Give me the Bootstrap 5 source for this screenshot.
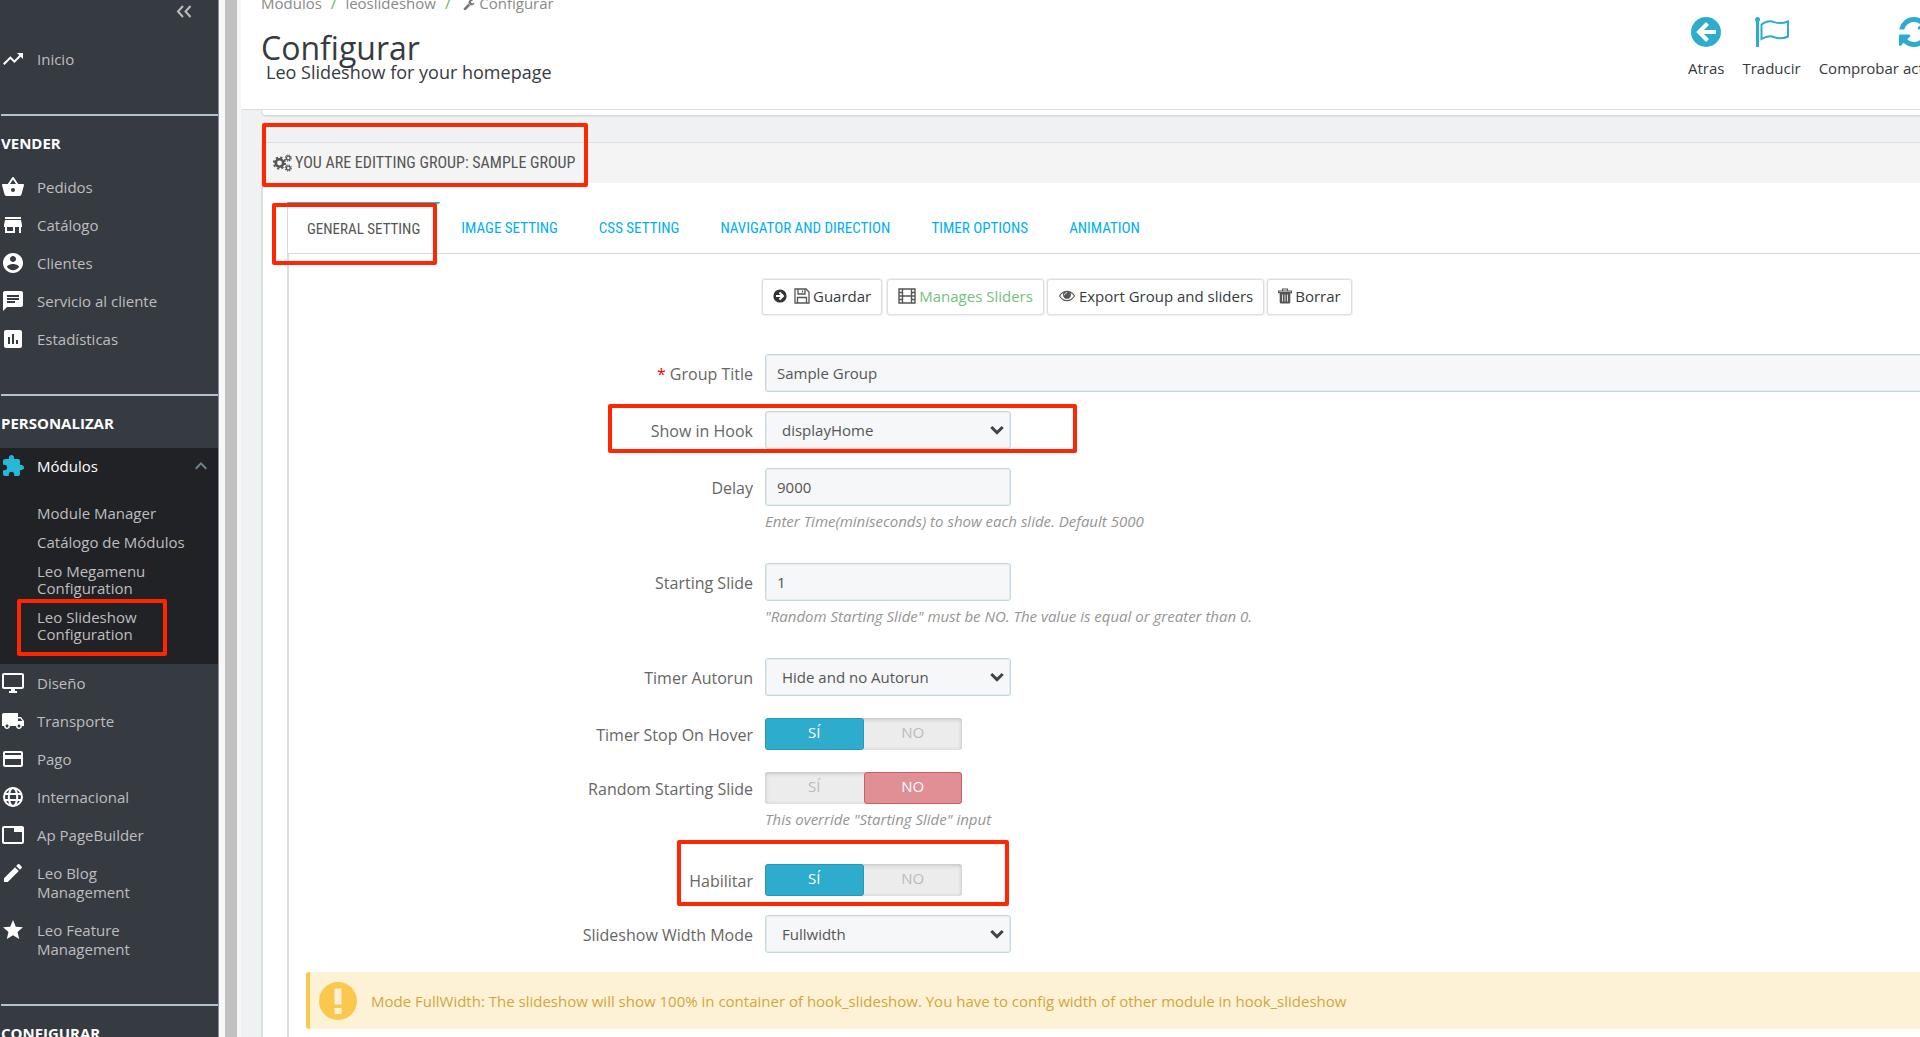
<!DOCTYPE html>
<html lang="es">
<head>
<meta charset="utf-8">
<meta name="viewport" content="width=device-width, initial-scale=1">
<title>Configurar - Leo Slideshow</title>
<link href="https://cdn.jsdelivr.net/npm/bootstrap@5.3.0/dist/css/bootstrap.min.css" rel="stylesheet">
<style>
body{font-family:"Open Sans","Noto Sans",sans-serif;font-size:15px;line-height:20px;color:#666;background:#eff1f2;height:100vh;overflow:hidden}
a{text-decoration:none}
.side-nav{width:219px;flex:none;background:#363a41;border-right:1px solid #8b8e92;overflow:hidden;height:100vh}
.side-nav ul{list-style:none;margin:0;padding:0}
.collapse-btn{height:40px;padding:2px 26px 0 0;background:none;border:0}
.side-link{display:flex;gap:12px;padding:10px 12px 9px 1px;line-height:19px;color:#bebebe}
.side-link svg{width:24px;height:24px;flex:none;margin:-3px 0;fill:#fff}
.side-link.two-line{padding-right:80px}
.side-title{height:52px;padding:18px 0 0 1px;line-height:18px;font-size:15px;font-weight:700;color:#fff;margin:0}
.side-rule{height:2px;margin:36px 0 0 1px;background:#b0c4ca}
.side-open{background:#202226}
.side-open .side-link{color:#fff;padding:9px 8px 9px 1px}
.side-open .side-link svg:first-child{fill:#25b9d7}
.side-sub{padding:14px 30px 15px 37px !important}
.side-sub a{display:block;padding:6px 0;line-height:17px;color:#bebebe}
.gutter{width:22px;flex:none;background:#c1c1c1;border-left:6px solid #f8f8f8;border-right:4px solid #f7f7f7}
.marker{position:absolute;border:4px solid #ff2600;border-radius:2px;pointer-events:none;z-index:3}
.work-area{min-width:0;overflow:hidden}
.page-head{background:#fff;height:110px;border-bottom:1px solid #dcdfe1;padding-left:20px}
.crumbs{margin-top:-7px;line-height:20px;color:#8a8a8a}
.crumbs .sep{color:#6cb33f;padding:0 9px}
.page-head h1{font-size:32px;line-height:40px;font-weight:400;color:#363a41;margin:15px 0 0}
.page-head h2{font-size:18px;line-height:24px;font-weight:400;color:#363a41;margin:-8px 0 0 5px}
.tool-links{gap:18px;margin-right:-89px;padding-top:17px}
.tool-links a{color:#363a41;white-space:nowrap}
.tool-links svg{width:30px;height:30px;display:block;margin:0 auto 11px}
.stage{padding-left:20px;margin-right:-100px}
.panel-prev{height:6px;background:#fff;border:1px solid #d3d8db;border-top:0;border-radius:0 0 5px 5px;box-shadow:0 1px 0 #dfe3e5}
.panel-main{margin-top:26px;background:#fff;border:2px solid #dcdfe1;border-top-width:1px;border-radius:5px 5px 0 0;height:1000px}
.panel-title{position:relative;height:40px;background:#f4f4f4;padding-left:10px;gap:3px;color:#555;border-radius:4px 4px 0 0}
.narrow-face{font-family:"Ubuntu Condensed","Roboto Condensed","Open Sans Condensed","DejaVu Sans Condensed",sans-serif;text-transform:uppercase}
.panel-title h3{font-size:16px;line-height:40px;margin:0;font-weight:400}
.panel-title svg{width:19px;height:18px}
.tab-zone{margin:19px 0 0 24px;position:relative}
.set-tabs{border-bottom:1px solid #d8d8d8;height:52px;gap:1px;flex-wrap:nowrap}
.set-tabs .nav-link{height:52px;padding:0 19px;line-height:50px;font-size:15px;border:1px solid transparent;border-radius:0;color:#00aff0;white-space:nowrap}
.set-tabs .nav-link.active{color:#555;background:#fff;border-color:#25b9d7 transparent #d8d8d8 #d8d8d8;border-top-width:2px}
.set-body{border-left:2px solid #dcdfe1;padding:25px 0 0 17px;height:900px}
.action-row{padding-left:456px;gap:3px;margin-bottom:39px}
.action-row .btn{height:36px;padding:0 10px 2px;border:1px solid #ddd;box-shadow:0 0 0 1px #f0f0f0;border-radius:3px;font-size:15px;line-height:20px;color:#363a41;display:flex;align-items:center;gap:3px;background:#fff}
.action-row .btn:first-child{margin-right:2px}
.action-row svg{height:16px;fill:#555}
.form-line{display:flex;gap:12px;margin-bottom:19px;position:relative}
.form-line>label,.form-line>.line-label{width:447px;flex:none;text-align:right;font-size:16px;line-height:40px;margin-bottom:-2px;color:#666}
.form-line>.line-label{line-height:34px}
.form-line.sw{padding-top:3px}
.field-set{flex:1;min-width:0}
.field-set .form-control,.field-set .form-select{height:38px;border:1px solid #c7d6db;border-radius:3px;background-color:#f6f7f9;font-size:15px;line-height:20px;color:#555;padding:0 11px 1px;box-shadow:0 0 0 1px #e4ecef inset}
.field-set .w-mid{width:246px}
.field-set .form-select{padding-left:16px;background-image:url("data:image/svg+xml,%3Csvg xmlns='http://www.w3.org/2000/svg' viewBox='0 0 14 10'%3E%3Cpath d='M1.3 2 7 7.6 12.700 2' fill='none' stroke='%23444' stroke-width='3'/%3E%3C/svg%3E");background-size:14px 10px;background-position:right 6px center}
.hint{height:38px;padding-top:5px;font-style:italic;color:#959595;white-space:nowrap}
.yes-no{display:flex;width:197px;height:32px;background:#ececec;border-radius:3px;box-shadow:inset 0 1px 4px rgba(0,0,0,.22)}
.yes-no label{flex:1;text-align:center;line-height:27px;color:#bbb;border:1px solid transparent;border-radius:3px}
.yes-no .btn-check:checked+.lab-yes{background:#2eacce;border-color:#2598b8;color:#fff}
.yes-no .btn-check:checked+.lab-no{background:#e08f95;border-color:#cd5d64;color:#fff}
.note-bar{height:57px;background:#fef2d6;border-left:4px solid #fbc84e;border-radius:3px;color:#d2a63c;padding-left:9px;gap:14px}
</style>
</head>
<body class="d-flex">
<nav class="side-nav">
  <button class="collapse-btn d-flex w-100 justify-content-end" aria-label="Contraer menú"><svg width="16" height="18" viewBox="0 0 16 18" fill="none" stroke="#bebebe" stroke-width="2"><path d="M7 4 2 9.500 7 15M14.500 4l-5 5.500 5 5.500"/></svg></button>
  <a class="side-link" href="#"><svg viewBox="0 0 24 24"><path d="M16 6l2.290 2.290-4.880 4.880-4-4L2 16.590 3.410 18l6-6 4 4 6.300-6.290L22 12V6z"/></svg>Inicio</a>
  <div class="side-rule"></div>
  <h6 class="side-title">VENDER</h6>
  <ul>
    <li><a class="side-link" href="#"><svg viewBox="0 0 24 24"><path d="M17.210 9l-4.380-6.560c-.19-.28-.51-.42-.83-.42-.32 0-.64.14-.83.43L6.790 9H2c-.55 0-1 .45-1 1 0 .09.010.18.040.27l2.540 9.270c.23.84 1 1.460 1.920 1.460h13c.92 0 1.690-.62 1.930-1.460l2.540-9.270L23 10c0-.55-.45-1-1-1h-4.790zM9 9l3-4.400L15 9H9zm3 8c-1.100 0-2-.9-2-2s.9-2 2-2 2 .9 2 2-.9 2-2 2z"/></svg>Pedidos</a></li>
    <li><a class="side-link" href="#"><svg viewBox="0 0 24 24"><path d="M20 4H4v2h16V4zm1 10v-2l-1-5H4l-1 5v2h1v6h10v-6h4v6h2v-6h1zm-9 4H6v-4h6v4z"/></svg>Catálogo</a></li>
    <li><a class="side-link" href="#"><svg viewBox="0 0 24 24"><path d="M12 2C6.480 2 2 6.480 2 12s4.480 10 10 10 10-4.480 10-10S17.520 2 12 2zm0 3c1.660 0 3 1.340 3 3s-1.340 3-3 3-3-1.340-3-3 1.340-3 3-3zm0 14.200c-2.500 0-4.710-1.280-6-3.220.03-1.990 4-3.080 6-3.080 1.990 0 5.970 1.090 6 3.080-1.290 1.940-3.500 3.220-6 3.220z"/></svg>Clientes</a></li>
    <li><a class="side-link" href="#"><svg viewBox="0 0 24 24"><path d="M20 2H4c-1.100 0-1.990.9-1.990 2L2 22l4-4h14c1.100 0 2-.9 2-2V4c0-1.100-.9-2-2-2zM6 9h12v2H6V9zm8 5H6v-2h8v2zm4-6H6V6h12v2z"/></svg>Servicio al cliente</a></li>
    <li><a class="side-link" href="#"><svg viewBox="0 0 24 24"><path d="M19 3H5c-1.100 0-2 .9-2 2v14c0 1.100.9 2 2 2h14c1.100 0 2-.9 2-2V5c0-1.100-.9-2-2-2zM9 17H7v-7h2v7zm4 0h-2V7h2v10zm4 0h-2v-4h2v4z"/></svg>Estadísticas</a></li>
  </ul>
  <div class="side-rule"></div>
  <h6 class="side-title">PERSONALIZAR</h6>
  <div class="side-open">
    <a class="side-link" href="#"><svg viewBox="0 0 24 24"><path d="M20.500 11H19V7c0-1.100-.9-2-2-2h-4V3.500C13 2.120 11.880 1 10.500 1S8 2.120 8 3.500V5H4c-1.100 0-1.990.9-1.990 2v3.800H3.500c1.490 0 2.700 1.210 2.700 2.700s-1.210 2.700-2.700 2.700H2V20c0 1.100.9 2 2 2h3.800v-1.500c0-1.490 1.210-2.700 2.700-2.700 1.490 0 2.700 1.210 2.700 2.700V22H17c1.100 0 2-.9 2-2v-4h1.500c1.380 0 2.500-1.120 2.500-2.500S21.880 11 20.500 11z"/></svg>Módulos<svg class="ms-auto" style="fill:#6c868e;width:18px" viewBox="3 0 18 24"><path d="M7.410 15.410 12 10.830l4.590 4.580L18 14l-6-6-6 6z"/></svg></a>
    <ul class="side-sub">
      <li><a href="#">Module Manager</a></li>
      <li><a href="#">Catálogo de Módulos</a></li>
      <li><a href="#">Leo Megamenu Configuration</a></li>
      <li class="position-relative"><a href="#">Leo Slideshow Configuration</a><span class="marker" style="left:-20px;top:-4px;width:150px;height:57px"></span></li>
    </ul>
  </div>
  <ul>
    <li><a class="side-link" href="#"><svg viewBox="0 0 24 24"><path d="M21 2H3c-1.100 0-2 .9-2 2v12c0 1.100.9 2 2 2h7v2H8v2h8v-2h-2v-2h7c1.100 0 2-.9 2-2V4c0-1.100-.9-2-2-2zm0 14H3V4h18v12z"/></svg>Diseño</a></li>
    <li><a class="side-link" href="#"><svg viewBox="0 0 24 24"><path d="M20 8h-3V4H3c-1.100 0-2 .9-2 2v11h2c0 1.660 1.340 3 3 3s3-1.340 3-3h6c0 1.660 1.340 3 3 3s3-1.340 3-3h2v-5l-3-4zM6 18.500c-.83 0-1.500-.67-1.500-1.500s.67-1.500 1.500-1.500 1.500.67 1.500 1.500-.67 1.500-1.500 1.500zm13.500-9l1.960 2.500H17V9.500h2.500zm-1.500 9c-.83 0-1.500-.67-1.500-1.500s.67-1.500 1.500-1.500 1.500.67 1.500 1.500-.67 1.500-1.500 1.500z"/></svg>Transporte</a></li>
    <li><a class="side-link" href="#"><svg viewBox="0 0 24 24"><path d="M20 4H4c-1.110 0-1.990.89-1.990 2L2 18c0 1.110.89 2 2 2h16c1.110 0 2-.89 2-2V6c0-1.110-.89-2-2-2zm0 14H4v-6h16v6zm0-10H4V6h16v2z"/></svg>Pago</a></li>
    <li><a class="side-link" href="#"><svg viewBox="0 0 24 24"><g fill="none" stroke="#fff" stroke-width="2"><circle cx="12" cy="12" r="9"/><ellipse cx="12" cy="12" rx="4.200" ry="9"/><path d="M3.500 9h17M3.500 15h17"/></g></svg>Internacional</a></li>
    <li><a class="side-link" href="#"><svg viewBox="0 0 24 24"><path d="M21 3H3c-1.100 0-2 .9-2 2v14c0 1.100.9 2 2 2h18c1.100 0 2-.9 2-2V5c0-1.100-.9-2-2-2zm0 16H3V5h10v4h8v10z"/></svg>Ap PageBuilder</a></li>
    <li><a class="side-link two-line" href="#"><svg viewBox="0 0 24 24"><path d="M3 17.250V21h3.750L17.810 9.940l-3.750-3.750L3 17.250zM20.710 7.040c.39-.39.39-1.020 0-1.410l-2.340-2.340c-.39-.39-1.020-.39-1.410 0l-1.830 1.830 3.750 3.750 1.830-1.830z"/></svg>Leo Blog Management</a></li>
    <li><a class="side-link two-line" href="#"><svg viewBox="0 0 24 24"><path d="M12 17.270L18.180 21l-1.640-7.030L22 9.240l-7.190-.61L12 2 9.190 8.630 2 9.240l5.460 4.730L5.820 21z"/></svg>Leo Feature Management</a></li>
  </ul>
  <div class="side-rule"></div>
  <h6 class="side-title">CONFIGURAR</h6>
</nav>
<div class="gutter"></div>
<main class="work-area flex-grow-1">
  <header class="page-head d-flex justify-content-between">
    <div>
      <div class="crumbs">Módulos<span class="sep">/</span>leoslideshow<span class="sep">/</span> <svg width="12" height="13" viewBox="0 0 1792 1792" fill="#777"><path d="M1092 1052l-682 682q-37 37-90 37-52 0-91-37l-106-108q-38-36-38-90 0-53 38-91l681-681q39 98 114.500 173.500t173.500 114.500zm634-435q0 39-23 106-47 134-164.500 217.500t-258.500 83.500q-185 0-316.500-131.500t-131.500-316.500 131.500-316.500 316.500-131.500q58 0 121.500 16.500t107.500 46.500q16 11 16 28t-16 28l-293 169v224l193 107q5-3 79-48.500t135.500-81 70.500-35.500q15 0 23.500 10t8.500 25z"/></svg> Configurar</div>
      <h1>Configurar</h1>
      <h2>Leo Slideshow for your homepage</h2>
    </div>
    <div class="tool-links d-flex">
      <a href="#"><svg viewBox="0 0 30 30"><circle cx="15" cy="15" r="15" fill="#2eacce"/><path d="M16.500 6.500 8 15l8.500 8.500M9 15h16" fill="none" stroke="#fff" stroke-width="4"/></svg>Atras</a>
      <a href="#"><svg style="width:34px" viewBox="0 0 34 30" fill="none" stroke="#2eacce"><circle cx="2.500" cy="2.500" r="2.500" fill="#2eacce" stroke="none"/><path d="M2.500 2v28" stroke-width="3"/><path d="M6.500 7.500C10 5 13 3.500 17 4.500s7 3.500 16 0v15c-8 4-12 1-16 0s-7 .5-10.500 2.500z" stroke-width="2"/></svg>Traducir</a>
      <a href="#"><svg viewBox="128 128 1536 1536" fill="#2eacce"><path d="M1639 1056q0 5-1 7-64 268-268 434.500t-478 166.500q-146 0-282.500-55t-243.500-157l-129 129q-19 19-45 19t-45-19-19-45v-448q0-26 19-45t45-19h448q26 0 45 19t19 45-19 45l-137 137q71 66 161 102t187 36q134 0 250-65t186-179q11-17 53-117 8-23 30-23h192q13 0 22.500 9.500t9.500 22.500zm25-800v448q0 26-19 45t-45 19h-448q-26 0-45-19t-19-45 19-45l138-138q-148-137-349-137-134 0-250 65t-186 179q-11 17-53 117-8 23-30 23h-199q-13 0-22.500-9.500t-9.500-22.500v-7q65-268 270-434.500t480-166.500q146 0 284 55.500t245 156.500l130-129q19-19 45-19t45 19 19 45z"/></svg>Comprobar actualizaciones</a>
    </div>
  </header>
  <div class="stage">
    <div class="panel-prev"></div>
    <section class="panel-main">
      <div class="panel-title d-flex align-items-center">
        <svg viewBox="0 0 19 18" fill="none" stroke="#555"><circle cx="6.500" cy="9" r="3.700" stroke-width="2.600"/><circle cx="6.500" cy="9" r="5.600" stroke-width="2" stroke-dasharray="2.200 2.200"/><circle cx="15.300" cy="4" r="1.900" stroke-width="1.300"/><circle cx="15.300" cy="4" r="3" stroke-width="1.100" stroke-dasharray="1.300 1.050"/><circle cx="15.300" cy="14" r="1.900" stroke-width="1.300"/><circle cx="15.300" cy="14" r="3" stroke-width="1.100" stroke-dasharray="1.300 1.050"/></svg>
        <h3 class="narrow-face">You are editting group: Sample Group</h3>
        <span class="marker" style="left:-1px;top:-20px;width:326px;height:64px"></span>
      </div>
      <div class="tab-zone">
        <ul class="nav set-tabs narrow-face">
          <li><a class="nav-link active" href="#">General setting</a></li>
          <li><a class="nav-link" href="#">Image setting</a></li>
          <li><a class="nav-link" href="#">CSS setting</a></li>
          <li><a class="nav-link" href="#">Navigator and direction</a></li>
          <li><a class="nav-link" href="#">Timer options</a></li>
          <li><a class="nav-link" href="#">Animation</a></li>
        </ul>
        <span class="marker" style="left:-15px;top:1px;width:165px;height:62px"></span>
        <form class="set-body">
          <div class="action-row d-flex">
            <button type="button" class="btn"><svg width="14" viewBox="0 0 14 16"><circle cx="7" cy="8" r="6.600" fill="#333"/><path d="M6.500 4.500 10 8l-3.500 3.500M3 8h6.500" fill="none" stroke="#fff" stroke-width="2"/></svg><svg class="ms-1" width="16" viewBox="0 0 16 16"><path d="M1 1h11l3 3v11H1zM4 1v5h7V1M3.500 15V9.500h9V15M8.500 2.500v2" fill="none" stroke="#555" stroke-width="1.300"/></svg>Guardar</button>
            <button type="button" class="btn" style="color:#72c279"><svg width="18" viewBox="0 0 18 16"><path d="M1 1h16v14H1zM4.500 1v14M13.500 1v14M4.500 8h9M1 4.500h3.500M1 8h3.500M1 11.500h3.500M13.500 4.500H17M13.500 8H17M13.500 11.500H17" fill="none" stroke="#555" stroke-width="1.400"/></svg>Manages Sliders</button>
            <button type="button" class="btn"><svg width="18" viewBox="0 64 1792 1792"><path d="M1664 960q-152-236-381-353 61 104 61 225 0 185-131.500 316.500t-316.500 131.500-316.500-131.500-131.500-316.500q0-121 61-225-229 117-381 353 133 205 333.500 326.500t434.500 121.500 434.500-121.500 333.500-326.500zm-720-384q0-20-14-34t-34-14q-125 0-214.500 89.500t-89.500 214.500q0 20 14 34t34 14 34-14 14-34q0-86 61-147t147-61q20 0 34-14t14-34zm848 384q0 34-20 69-140 230-376.500 368.500t-499.500 138.500-499.500-139-376.500-368q-20-35-20-69t20-69q140-229 376.500-368t499.500-139 499.500 139 376.500 368q20 35 20 69z"/></svg>Export Group and sliders</button>
            <button type="button" class="btn"><svg width="14" viewBox="0 0 13 16"><path d="M0 3h13v1.600H0zM4 3V1h5v2" fill="none" stroke="#555" stroke-width="1.200"/><path d="M1.200 4.500h10.600V14q0 1.500-1.500 1.500H2.700q-1.500 0-1.500-1.500z"/><path d="M4 6.500v7M6.500 6.500v7M9 6.500v7" stroke="#fff" stroke-width=".8"/></svg>Borrar</button>
          </div>
          <div class="form-line"><label for="f-title"><span style="color:red">*</span> Group Title</label><div class="field-set"><input id="f-title" class="form-control" value="Sample Group"></div></div>
          <div class="form-line"><label for="f-hook">Show in Hook</label><div class="field-set"><select id="f-hook" class="form-select w-mid"><option>displayHome</option></select></div><span class="marker" style="left:302px;top:-7px;width:469px;height:49px"></span></div>
          <div class="form-line"><label for="f-delay">Delay</label><div class="field-set"><input id="f-delay" class="form-control w-mid" value="9000"><div class="hint">Enter Time(miniseconds) to show each slide. Default 5000</div></div></div>
          <div class="form-line"><label for="f-start">Starting Slide</label><div class="field-set"><input id="f-start" class="form-control w-mid" value="1"><div class="hint">"Random Starting Slide" must be NO. The value is equal or greater than 0.</div></div></div>
          <div class="form-line"><label for="f-auto">Timer Autorun</label><div class="field-set"><select id="f-auto" class="form-select w-mid"><option>Hide and no Autorun</option></select></div></div>
          <div class="form-line sw"><span class="line-label" id="l-hover">Timer Stop On Hover</span><div class="field-set"><div class="yes-no" role="radiogroup" aria-labelledby="l-hover"><input type="radio" class="btn-check" name="hover" id="hover1" checked><label class="lab-yes" for="hover1">SÍ</label><input type="radio" class="btn-check" name="hover" id="hover0"><label class="lab-no" for="hover0">NO</label></div></div></div>
          <div class="form-line sw"><span class="line-label" id="l-random">Random Starting Slide</span><div class="field-set"><div class="yes-no" role="radiogroup" aria-labelledby="l-random"><input type="radio" class="btn-check" name="random" id="random1"><label class="lab-yes" for="random1">SÍ</label><input type="radio" class="btn-check" name="random" id="random0" checked><label class="lab-no" for="random0">NO</label></div><div class="hint">This override "Starting Slide" input</div></div></div>
          <div class="form-line sw"><span class="line-label" id="l-on">Habilitar</span><div class="field-set"><div class="yes-no" role="radiogroup" aria-labelledby="l-on"><input type="radio" class="btn-check" name="on" id="on1" checked><label class="lab-yes" for="on1">SÍ</label><input type="radio" class="btn-check" name="on" id="on0"><label class="lab-no" for="on0">NO</label></div></div><span class="marker" style="left:371px;top:-21px;width:332px;height:66px"></span></div>
          <div class="form-line"><label for="f-width">Slideshow Width Mode</label><div class="field-set"><select id="f-width" class="form-select w-mid"><option>Fullwidth</option></select></div></div>
          <div class="note-bar d-flex align-items-center"><svg width="38" height="38" viewBox="0 0 38 38"><circle cx="19" cy="19" r="19" fill="#fbc84e"/><path d="M15.500 6.500h7v16h-7zM15.500 26h7v6h-7z" fill="#fef2d6"/></svg><span>Mode FullWidth: The slideshow will show 100% in container of hook_slideshow. You have to config width of other module in hook_slideshow</span></div>
        </form>
      </div>
    </section>
  </div>
</main>
<script src="https://cdn.jsdelivr.net/npm/bootstrap@5.3.0/dist/js/bootstrap.bundle.min.js"></script>
</body>
</html>
